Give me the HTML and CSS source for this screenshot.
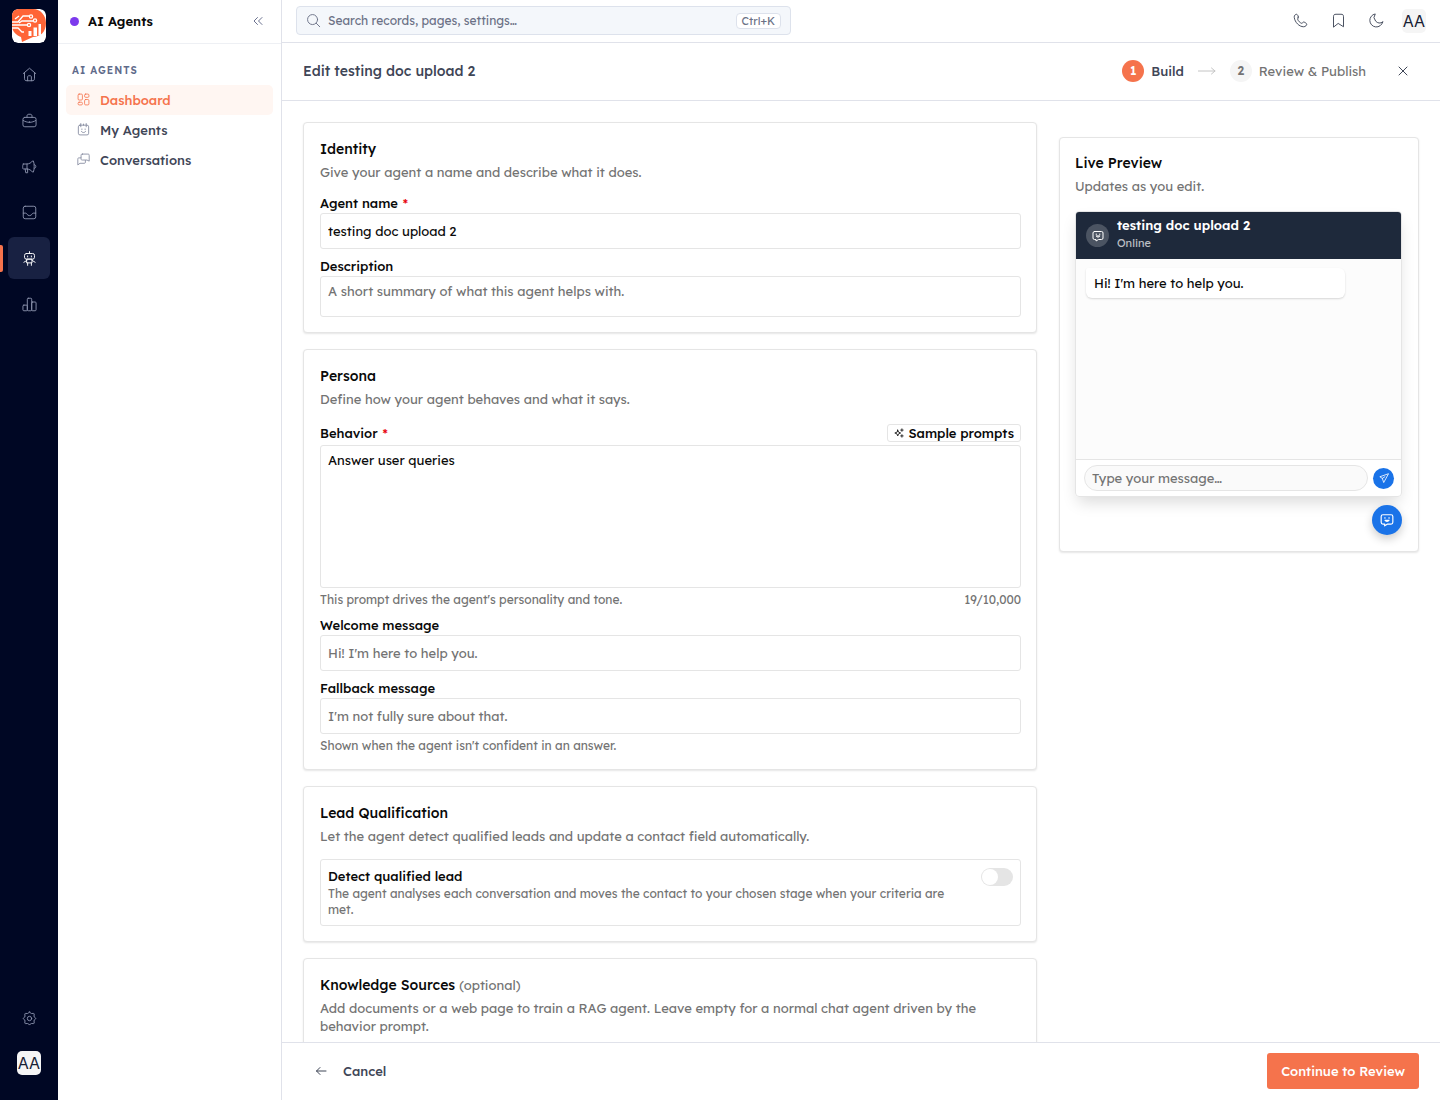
FILE: index.html
```html
<!DOCTYPE html>
<html lang="en">
<head>
<meta charset="utf-8">
<meta name="viewport" content="width=device-width, initial-scale=1">
<title>Edit agent</title>
<link rel="stylesheet" href="styles.css">
</head>
<body>
<svg class="sprite" aria-hidden="true">
  <symbol id="chat-bot" viewBox="0 0 24 24"><path d="M5 3h14a3 3 0 0 1 3 3v10a3 3 0 0 1-3 3h-6l-5 3v-3H5a3 3 0 0 1-3-3V6a3 3 0 0 1 3-3z"/><path d="M8.500 8v1M15.500 8v1M8.500 12.500c1.500 2.500 5.500 2.500 7 0z"/></symbol>
</svg>
<div class="app">
  <nav class="rail" aria-label="Main">
    <a href="#" class="logo" aria-label="Company home">
      <svg viewBox="0 0 34 34"><rect width="34" height="34" rx="6" fill="#fff"/><path d="M0 5Q1 0 7 0h14c8 0 13 7 13 14 0 9-6 14-13 14l-11 5-1-5C4 26 0 22 0 17z" fill="#ff6537"/><g fill="none" stroke="#fff" stroke-width="1.300"><path d="M0 13h6l5-6h6M0 16h15M0 19h6l4 4h2M7 14l3-2h11M3 10l4-3"/><circle cx="19" cy="7.500" r="1.600"/><circle cx="23" cy="11.500" r="1.600"/><circle cx="17" cy="16" r="1.600"/></g><path d="M16.500 22h3v5h-3zM21.500 18.500H25V27h-3.500zM26.500 15H29v11.500h-2.500z" fill="#fff"/></svg>
    </a>
    <a href="#" class="rail-item" aria-label="Home"><svg class="icon" viewBox="0 0 24 24"><path d="M2 10.500 12 2l10 8.500M4 9v9c0 3 1 4 4 4h8c3 0 4-1 4-4V9M9 22v-6c0-1.500.5-2 2-2h2c1.500 0 2 .5 2 2v6"/></svg></a>
    <a href="#" class="rail-item" aria-label="Work"><svg class="icon" viewBox="0 0 24 24"><rect x="1.500" y="7" width="21" height="15" rx="3"/><path d="M8 7V5c0-2 1-3 3-3h2c2 0 3 1 3 3v2M2 12c6 4 14 4 20 0M12 14v1"/></svg></a>
    <a href="#" class="rail-item" aria-label="Campaigns"><svg class="icon" viewBox="0 0 24 24"><path d="M2 8h6c3 0 7-2 9-5h1c2 3 2 15 0 18h-1c-2-3-6-5-9-5H2c-1.300 0-1.300-8 0-8zM8 8v8M5 16l1 6h3v-6M20 9c3 0 3 6 0 6"/></svg></a>
    <a href="#" class="rail-item" aria-label="Inbox"><svg class="icon" viewBox="0 0 24 24"><rect x="2" y="2" width="20" height="20" rx="3"/><path d="M2 13h4c2 0 2 4 6 4s4-4 6-4h4"/></svg></a>
    <a href="#" class="rail-item active" aria-label="AI Agents" aria-current="page"><svg class="icon" viewBox="0 0 24 24"><rect x="4" y="4" width="16" height="9" rx="3"/><path d="M12 4V1M9 8v1.500M15 8v1.500M8 13h8v6H8zM8 15l-5 3M16 15l5 3M9 19v4M15 19v4"/></svg></a>
    <a href="#" class="rail-item" aria-label="Reports"><svg class="icon" viewBox="0 0 24 24"><rect x="1.500" y="13" width="7" height="9" rx="1.500"/><rect x="8.500" y="2" width="7" height="20" rx="1.500"/><rect x="15.500" y="8" width="7" height="14" rx="1.500"/></svg></a>
    <a href="#" class="rail-item rail-end" aria-label="Settings"><svg class="icon" viewBox="0 0 24 24"><circle cx="12" cy="12" r="3.500"/><path d="M12 1.500q1.500 2.500 3 2.500 4.500-.5 4.500.5-.5 4.500 0 5 2.500 1.500 2.500 2.500t-2.500 2.500q-.5.500 0 5 0 1-4.500.5-1.500 0-3 2.500-1.500-2.500-3-2.500-4.500.5-4.500-.5.5-4.500 0-5Q2 13 2 12t2.500-2.500q.5-.5 0-5 0-1 4.500-.5 1.500 0 3-2.500z"/></svg></a>
    <button class="avatar" aria-label="Account">AA</button>
  </nav>

  <aside class="sidebar">
    <header class="side-head"><span class="dot"></span><h2>AI Agents</h2>
      <button class="icon-btn" aria-label="Collapse sidebar"><svg class="icon icon-sm" viewBox="0 0 24 24"><path d="M11 5l-7 7 7 7M20 5l-7 7 7 7"/></svg></button></header>
    <nav class="side-nav" aria-label="AI Agents">
      <h3>AI AGENTS</h3>
      <a href="#" class="current"><svg class="icon" viewBox="0 0 24 24"><rect x="2" y="2" width="8" height="11" rx="2"/><rect x="14" y="2" width="8" height="6" rx="2"/><rect x="2" y="17" width="8" height="5" rx="2"/><rect x="14" y="12" width="8" height="10" rx="2"/></svg>Dashboard</a>
      <a href="#"><svg class="icon" viewBox="0 0 24 24"><rect x="2.500" y="4" width="19" height="18" rx="3"/><path d="M7 1v6M12 4V2M17 1v6M9 11v1M15 11v1M8 15.500c2 3 6 3 8 0"/></svg>My Agents</a>
      <a href="#"><svg class="icon" viewBox="0 0 24 24"><path d="M10 2h10c2 0 2.500.5 2.500 2.500V15l-4-2H10c-2 0-2.500-.5-2.500-2.500v-6C7.500 2.500 8 2 10 2zM7 9H4c-2 0-2.500.5-2.500 2.500V22l4-3H13c2 0 2.500-.5 2.500-2.500V14"/></svg>Conversations</a>
    </nav>
  </aside>

  <div class="page">
    <header class="topbar">
      <label class="search"><svg class="icon" viewBox="0 0 24 24"><circle cx="10.500" cy="10.500" r="8"/><path d="M16.500 16.500 22 22"/></svg>
        <input type="search" aria-label="Search" placeholder="Search records, pages, settings…"><kbd>Ctrl+K</kbd></label>
      <div class="tools">
        <button class="icon-btn" aria-label="Calls"><svg class="icon" viewBox="0 0 24 24"><path d="M8.500 6.500C9 5.500 7 2 5.500 2 4 2 1.500 4 2 7c1 8 8 15 15 15 3 0 5-2.500 5-4 0-1.500-4-4-5.500-3.500-1 .5-1.500 2-2.500 2-2.500-.5-6-4-6.500-6.500 0-1.500 1-2 1-3.500z"/></svg></button>
        <button class="icon-btn" aria-label="Bookmarks"><svg class="icon" viewBox="0 0 24 24"><path d="M4 22V6c0-3 1-4 4-4h8c3 0 4 1 4 4v16l-8-5z"/></svg></button>
        <button class="icon-btn" aria-label="Dark mode"><svg class="icon" viewBox="0 0 24 24"><path d="M22 14.500A10.500 10.500 0 1 1 10 1.500 9 9 0 0 0 22 14.500z"/></svg></button>
        <button class="avatar" aria-label="Profile">AA</button>
      </div>
    </header>

    <div class="edit-head">
      <h1>Edit testing doc upload 2</h1>
      <ol class="steps">
        <li class="on"><span class="num">1</span>Build</li>
        <li class="arrow" aria-hidden="true"><svg class="icon" viewBox="0 0 18 8"><path d="M0 4h17M13.500 1l3.500 3-3.500 3"/></svg></li>
        <li><span class="num">2</span>Review &amp; Publish</li>
      </ol>
      <button class="icon-btn close" aria-label="Close"><svg class="icon icon-sm" viewBox="0 0 24 24"><path d="M4 4l16 16M20 4 4 20"/></svg></button>
    </div>

    <main class="content">
      <form class="cards" id="agent">
        <section class="card">
          <h2>Identity</h2>
          <p class="lead">Give your agent a name and describe what it does.</p>
          <div class="field"><label for="name">Agent name <span class="req">*</span></label>
            <input id="name" type="text" value="testing doc upload 2"></div>
          <div class="field"><label for="desc">Description</label>
            <textarea id="desc" class="short" placeholder="A short summary of what this agent helps with."></textarea></div>
        </section>

        <section class="card">
          <h2>Persona</h2>
          <p class="lead">Define how your agent behaves and what it says.</p>
          <div class="field">
            <div class="field-head"><label for="behavior">Behavior <span class="req">*</span></label>
              <button type="button" class="prompts"><svg class="icon" viewBox="0 0 24 24"><path d="M9 5l2 5 5 2-5 2-2 5-2-5-5-2 5-2zM19 2v6M16 5h6M19 16v6M16 19h6"/></svg>Sample prompts</button></div>
            <textarea id="behavior" class="tall">Answer user queries</textarea>
            <p class="hint"><span>This prompt drives the agent's personality and tone.</span><span>19/10,000</span></p></div>
          <div class="field"><label for="welcome">Welcome message</label>
            <input id="welcome" type="text" placeholder="Hi! I'm here to help you."></div>
          <div class="field"><label for="fallback">Fallback message</label>
            <input id="fallback" type="text" placeholder="I'm not fully sure about that.">
            <p class="hint">Shown when the agent isn't confident in an answer.</p></div>
        </section>

        <section class="card">
          <h2>Lead Qualification</h2>
          <p class="lead">Let the agent detect qualified leads and update a contact field automatically.</p>
          <div class="option">
            <div><label for="detect">Detect qualified lead</label>
              <p>The agent analyses each conversation and moves the contact to your chosen stage when your criteria are met.</p></div>
            <input type="checkbox" role="switch" id="detect" class="switch">
          </div>
        </section>

        <section class="card">
          <h2>Knowledge Sources <small>(optional)</small></h2>
          <p class="lead">Add documents or a web page to train a RAG agent. Leave empty for a normal chat agent driven by the behavior prompt.</p>
          <div class="field"><input type="url" aria-label="Web page"></div>
        </section>
      </form>

      <aside class="card preview">
        <h2>Live Preview</h2>
        <p class="lead">Updates as you edit.</p>
        <div class="chat">
          <div class="chat-head"><span class="bot"><svg class="icon"><use href="#chat-bot"/></svg></span>
            <div><strong>testing doc upload 2</strong><small>Online</small></div></div>
          <div class="chat-body"><p class="bubble">Hi! I'm here to help you.</p></div>
          <div class="chat-foot"><input type="text" aria-label="Message" placeholder="Type your message…">
            <button class="send" aria-label="Send"><svg class="icon" viewBox="0 0 24 24"><path d="M22 2 2 9l6 4 3 9zM8 13l6-4"/></svg></button></div>
        </div>
        <button class="fab" aria-label="Toggle chat"><svg class="icon"><use href="#chat-bot"/></svg></button>
      </aside>
    </main>

    <footer class="actions">
      <button class="cancel"><svg class="icon icon-sm" viewBox="0 0 24 24"><path d="M22 12H3M10 5l-7 7 7 7"/></svg>Cancel</button>
      <button class="primary" form="agent">Continue to Review</button>
    </footer>
  </div>
</div>
</body>
</html>
```
FILE: styles.css
```css
:root {
  --orange: #f5734c;
  --blue: #1a73e8;
  --line: #e0e2ea;
  --card-line: #e5e5e5;
  --ink: #0a0a0a;
  --slate: #3f4657;
  --muted: #737373;
}
* { box-sizing: border-box; }
body {
  margin: 0;
  font: 13px/18px Lexend, Inter, sans-serif;
  color: var(--ink);
  background: #fff;
}
h1, h2, h3, p, ol { margin: 0; padding: 0; }
button, input, textarea { font: inherit; color: inherit; }
button { padding: 0; border: 0; background: none; }
a { color: inherit; text-decoration: none; }
label { font-weight: 500; }
::placeholder { color: var(--muted); opacity: 1; }

.sprite { display: none; }
.icon {
  width: 15px;
  height: 15px;
  flex: none;
  fill: none;
  stroke: currentColor;
  stroke-width: 1.5;
  stroke-linecap: round;
  stroke-linejoin: round;
}
.icon-sm { width: 12px; height: 12px; stroke-width: 2; }
.icon-btn { display: grid; place-items: center; width: 24px; height: 24px; }

.app { display: grid; grid-template-columns: 58px 224px 1fr; height: 100vh; }

/* Icon rail */
.rail {
  display: flex;
  flex-direction: column;
  align-items: center;
  gap: 4px;
  padding: 9px 0 25px;
  background: #000724;
  color: #8a91ac;
}
.logo { height: 34px; margin-bottom: 6px; }
.logo svg { width: 34px; height: 34px; border-radius: 6px; }
.rail-item {
  display: grid;
  place-items: center;
  width: 42px;
  height: 42px;
  border-radius: 6px;
  position: relative;
}
.rail-item.active { background: #182142; color: #fff; }
.rail-item.active::before {
  content: "";
  position: absolute;
  left: -8px;
  top: 8px;
  width: 3px;
  height: 27px;
  background: var(--orange);
  border-radius: 0 2px 2px 0;
}
.rail-end { margin-top: auto; }
.avatar {
  width: 24px;
  height: 24px;
  border-radius: 5px;
  background: #f5f5f5;
  color: #172033;
  font: 16px/24px Inter, sans-serif;
}
.rail .avatar { margin-top: 8px; }

/* Section sidebar */
.sidebar { border-right: 1px solid var(--line); }
.side-head {
  display: flex;
  align-items: center;
  height: 44px;
  padding: 0 11px 1px 12px;
  border-bottom: 1px solid #eef0f4;
  color: #6b7290;
}
.side-head h2 { flex: 1; font-size: 13px; font-weight: 600; color: var(--ink); }
.dot { width: 9px; height: 9px; margin-right: 9px; border-radius: 50%; background: #7c3aed; }
.side-nav { padding: 18px 8px; }
.side-nav h3 {
  padding: 0 6px 5px;
  font-size: 10px;
  font-weight: 600;
  letter-spacing: 1px;
  color: #5f6b8a;
}
.side-nav a {
  display: flex;
  align-items: center;
  gap: 10px;
  height: 30px;
  padding: 0 11px 1px;
  border-radius: 5px;
  font-weight: 500;
  color: var(--slate);
}
.side-nav .icon { width: 13px; height: 13px; color: #7d8299; }
.side-nav .current, .side-nav .current .icon { color: var(--orange); }
.side-nav .current { background: #fff6f2; }

/* Page frame */
.page { display: flex; flex-direction: column; min-width: 0; min-height: 0; }
.topbar {
  display: flex;
  flex: none;
  align-items: center;
  justify-content: space-between;
  height: 43px;
  padding: 0 14px 1px;
  border-bottom: 1px solid var(--line);
}
.search {
  display: flex;
  align-items: center;
  gap: 7px;
  width: 495px;
  height: 29px;
  padding: 0 9px;
  border: 1px solid #dde2ec;
  border-radius: 4px;
  background: #f4f7fb;
  color: #6b7186;
  font-weight: 400;
}
.search input {
  flex: 1;
  min-width: 0;
  padding: 0;
  border: 0;
  background: none;
  font-size: 12px;
}
.search input::placeholder { color: #6b7186; }
kbd {
  padding: 0 5px;
  border: 1px solid #dde2ec;
  border-radius: 4px;
  background: #fff;
  font: 400 11px/14px Lexend, Inter, sans-serif;
}
.tools { display: flex; align-items: center; gap: 14px; color: var(--slate); }

.edit-head {
  display: flex;
  flex: none;
  align-items: center;
  height: 58px;
  padding: 0 25px 1px 21px;
  border-bottom: 1px solid var(--line);
}
.edit-head h1 { flex: 1; font-size: 14px; font-weight: 500; color: var(--slate); }
.steps { display: flex; align-items: center; gap: 14px; list-style: none; color: var(--muted); }
.steps li { display: flex; align-items: center; gap: 7px; }
.steps .on { font-weight: 500; color: var(--slate); }
.num {
  width: 22px;
  border-radius: 50%;
  background: #f5f5f5;
  font-size: 12px;
  font-weight: 600;
  line-height: 22px;
  text-align: center;
}
.on .num { background: var(--orange); color: #fff; }
.arrow .icon { width: 18px; height: 8px; stroke: #c4c4c4; stroke-width: 1; }
.close { margin-left: 25px; color: var(--slate); }

.content {
  display: grid;
  grid-template-columns: 1fr 360px;
  gap: 22px;
  align-items: start;
  flex: 1;
  min-height: 0;
  padding: 21px;
  overflow: auto;
  scrollbar-width: none;
}
.cards { display: flex; flex-direction: column; gap: 16px; min-width: 0; }
.card {
  padding: 16px 15px 15px 16px;
  border: 1px solid var(--card-line);
  border-radius: 4px;
  background: #fff;
  box-shadow: 0 1px 2px rgba(0, 0, 0, .1);
}
.card h2 { font-size: 14px; font-weight: 500; line-height: 20px; }
.card h2 small { font-size: 13px; font-weight: 400; color: var(--muted); }
.lead { margin: 4px 0 12px; color: var(--muted); }

/* Form fields */
.field + .field { margin-top: 7px; }
.field > label { display: block; line-height: 20px; }
.req { margin-left: 1px; color: #e7000b; }
.field input, .field textarea {
  display: block;
  width: 100%;
  border: 1px solid var(--card-line);
  border-radius: 3px;
  background: #fff;
}
.field input { height: 36px; padding: 0 7px; }
.field textarea { padding: 5px 7px; resize: none; }
.short { height: 41px; }
.tall { height: 143px; }
.field-head { display: flex; align-items: center; justify-content: space-between; height: 25px; }
.prompts {
  display: flex;
  align-items: center;
  gap: 4px;
  height: 18px;
  padding: 0 6px;
  border: 1px solid var(--card-line);
  border-radius: 3px;
  font-weight: 500;
}
.prompts .icon { width: 10px; height: 10px; stroke-width: 2; }
.hint {
  display: flex;
  justify-content: space-between;
  margin-top: 4px;
  font-size: 12px;
  line-height: 16px;
  color: var(--muted);
}
.option {
  display: flex;
  gap: 32px;
  margin-top: 14px;
  padding: 7px;
  border: 1px solid var(--card-line);
  border-radius: 3px;
}
.option > div { flex: 1; }
.option p { margin-top: 1px; font-size: 12px; line-height: 16px; color: var(--muted); }
.switch {
  display: flex;
  appearance: none;
  width: 32px;
  height: 18px;
  margin: 1px 0;
  padding: 1px;
  border-radius: 9px;
  background: var(--card-line);
}
.switch::before { content: ""; width: 16px; height: 16px; border-radius: 50%; background: #fff; }
.switch:checked { justify-content: flex-end; background: var(--orange); }

/* Live preview */
.preview {
  display: flex;
  flex-direction: column;
  margin-top: 15px;
  padding: 15px 16px 16px 15px;
}
.preview .lead { margin-bottom: 16px; }
.chat {
  overflow: hidden;
  border: 1px solid var(--card-line);
  border-radius: 4px;
  box-shadow: 0 8px 16px -3px rgba(0, 0, 0, .15);
}
.chat-head {
  display: flex;
  align-items: center;
  gap: 8px;
  height: 47px;
  padding: 0 10px;
  background: #1e293b;
  color: #fff;
}
.chat-head div { padding-bottom: 4px; }
.chat-head strong, .chat-head small { display: block; }
.chat-head strong { font-weight: 600; }
.chat-head small { font-size: 11px; font-weight: 400; opacity: .7; }
.bot {
  display: grid;
  place-items: center;
  width: 23px;
  height: 23px;
  border-radius: 50%;
  background: #4b5462;
}
.bot .icon { width: 12px; height: 12px; stroke-width: 2; }
.chat-body { height: 200px; padding: 9px 10px; background: #fcfcfc; }
.bubble {
  width: 85%;
  padding: 6px 8px;
  border-radius: 2px 6px 6px 6px;
  background: #fff;
  box-shadow: 0 1px 2px rgba(0, 0, 0, .15);
}
.chat-foot {
  display: flex;
  align-items: center;
  gap: 5px;
  padding: 5px 7px 5px 8px;
  border-top: 1px solid var(--card-line);
}
.chat-foot input {
  flex: 1;
  min-width: 0;
  height: 26px;
  padding: 0 7px;
  border: 1px solid var(--card-line);
  border-radius: 13px;
  background: #fafafa;
}
.send, .fab { display: grid; place-items: center; border-radius: 50%; background: var(--blue); color: #fff; }
.send { width: 21px; height: 21px; }
.send .icon { width: 10px; height: 10px; stroke-width: 2; }
.fab {
  align-self: flex-end;
  width: 30px;
  height: 30px;
  margin-top: 8px;
  box-shadow: 0 4px 10px rgba(0, 0, 0, .2);
}
.fab .icon { width: 14px; height: 14px; stroke-width: 2; }

/* Footer actions */
.actions {
  display: flex;
  flex: none;
  align-items: center;
  justify-content: space-between;
  height: 58px;
  padding: 0 21px 1px 33px;
  border-top: 1px solid var(--line);
}
.cancel { display: flex; align-items: center; gap: 16px; font-weight: 500; color: var(--slate); }
.primary {
  height: 36px;
  padding: 0 14px;
  border-radius: 3px;
  background: var(--orange);
  color: #fff;
  font-weight: 500;
}
```
